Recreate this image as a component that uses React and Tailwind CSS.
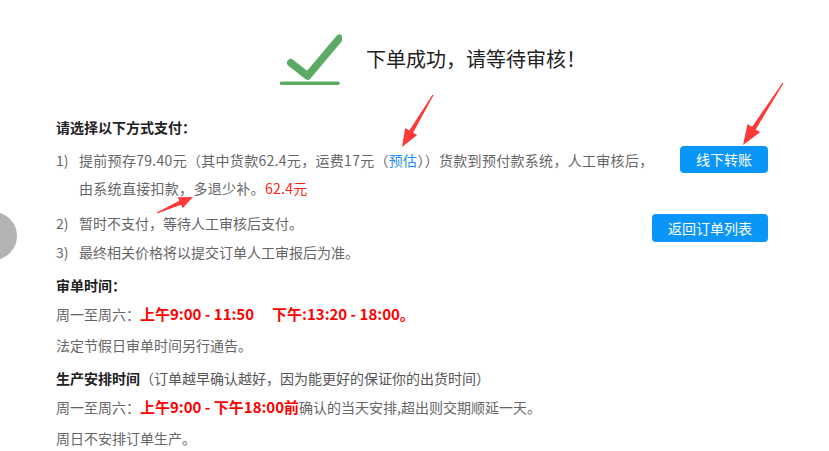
import React from 'react';

const arrows = [
  { tail: [433, 95], tip: [402, 147], head: 18, wing: 7 },
  { tail: [783, 83], tip: [743, 145], head: 20, wing: 7.5 },
  { tail: [157, 213], tip: [193, 197], head: 14, wing: 6 },
];

function arrowPoints({ tail, tip, head, wing }) {
  const dx = tip[0] - tail[0];
  const dy = tip[1] - tail[1];
  const len = Math.hypot(dx, dy);
  const ux = dx / len, uy = dy / len;
  const nx = -uy, ny = ux;
  const bx = tip[0] - ux * head, by = tip[1] - uy * head;
  const p = (x, y) => `${x.toFixed(1)},${y.toFixed(1)}`;
  return [
    p(tail[0] + nx * 0.6, tail[1] + ny * 0.6),
    p(bx + nx * 2.2, by + ny * 2.2),
    p(bx + nx * wing, by + ny * wing),
    p(tip[0], tip[1]),
    p(bx - nx * wing, by - ny * wing),
    p(bx - nx * 2.2, by - ny * 2.2),
    p(tail[0] - nx * 0.6, tail[1] - ny * 0.6),
  ].join(' ');
}

export default function App() {
  return (
    <div className="relative w-full h-[451px] bg-white overflow-hidden text-[14px] text-[#666]" style={{ fontFamily: '"Noto Sans CJK SC", "Noto Sans", sans-serif' }}>
      {/* header */}
      <div className="flex items-center pl-[280px] pt-[30px]">
        <svg width="62" height="58" viewBox="0 0 62 58">
          <polyline points="10.7,32.7 27.7,46 59.3,8.3" fill="none" stroke="#5cab64" strokeWidth="7.5" strokeLinecap="round" strokeLinejoin="round" />
          <line x1="1.5" y1="53.3" x2="58" y2="53.3" stroke="#5cab64" strokeWidth="3.5" strokeLinecap="round" />
        </svg>
        <h1 className="ml-[24px] text-[20px] text-[#222] leading-none">下单成功，请等待审核！</h1>
      </div>

      {/* payment options */}
      <div className="flex mt-[25px] pl-[56px] pr-[61px]">
        <div className="min-w-0 flex-1 leading-[28px]">
          <p className="font-bold text-[#222]">请选择以下方式支付：</p>
          <div className="flex mt-[5px]">
            <span className="w-[23px] shrink-0">1)</span>
            <p className="whitespace-nowrap tracking-[0.3px]">
              提前预存79.40元（其中货款62.4元，运费17元（<span className="text-[#1e8fff]">预估</span>））货款到预付款系统，人工审核后，<br />
              由系统直接扣款，多退少补。<span className="text-[#ff1a1a]">62.4元</span>
            </p>
          </div>
          <div className="flex mt-[7px]">
            <span className="w-[23px] shrink-0">2)</span>
            <p>暂时不支付，等待人工审核后支付。</p>
          </div>
          <div className="flex mt-[1px]">
            <span className="w-[23px] shrink-0">3)</span>
            <p>最终相关价格将以提交订单人工审报后为准。</p>
          </div>
        </div>
        <div className="shrink-0 flex flex-col items-end">
          <button className="mt-[33px] w-[88px] h-[27px] rounded-[4px] bg-[#0996f8] text-white text-[14px]">线下转账</button>
          <button className="mt-[41px] w-[116px] h-[28px] rounded-[4px] bg-[#0996f8] text-white text-[14px]">返回订单列表</button>
        </div>
      </div>

      {/* review times */}
      <div className="pl-[56px] leading-[28px]">
        <p className="mt-[5px] font-bold text-[#222]">审单时间：</p>
        <p className="mt-[1px]">
          周一至周六：<span className="font-bold text-[#ff0000] text-[15px]">上午9:00 - 11:50<span className="ml-[18px]">下午:13:20 - 18:00。</span></span>
        </p>
        <p className="mt-[3px]">法定节假日审单时间另行通告。</p>
        <p className="mt-[5px]">
          <span className="font-bold text-[#222]">生产安排时间</span><span className="text-[#555]">（订单越早确认越好，因为能更好的保证你的出货时间）</span>
        </p>
        <p className="mt-[1px]">
          周一至周六：<span className="font-bold text-[#ff0000] text-[15px]">上午9:00 - 下午18:00前</span>确认的当天安排,超出则交期顺延一天。
        </p>
        <p className="mt-[3px]">周日不安排订单生产。</p>
      </div>

      {/* floating side button */}
      <div className="absolute left-[-31px] top-[212px] w-[48px] h-[48px] rounded-full bg-[#b3b3b3]" />

      {/* annotation arrows */}
      <svg className="absolute inset-0 pointer-events-none" width="829" height="451">
        {arrows.map((a, i) => (
          <polygon key={i} points={arrowPoints(a)} fill="#ff3838" />
        ))}
      </svg>
    </div>
  );
}
